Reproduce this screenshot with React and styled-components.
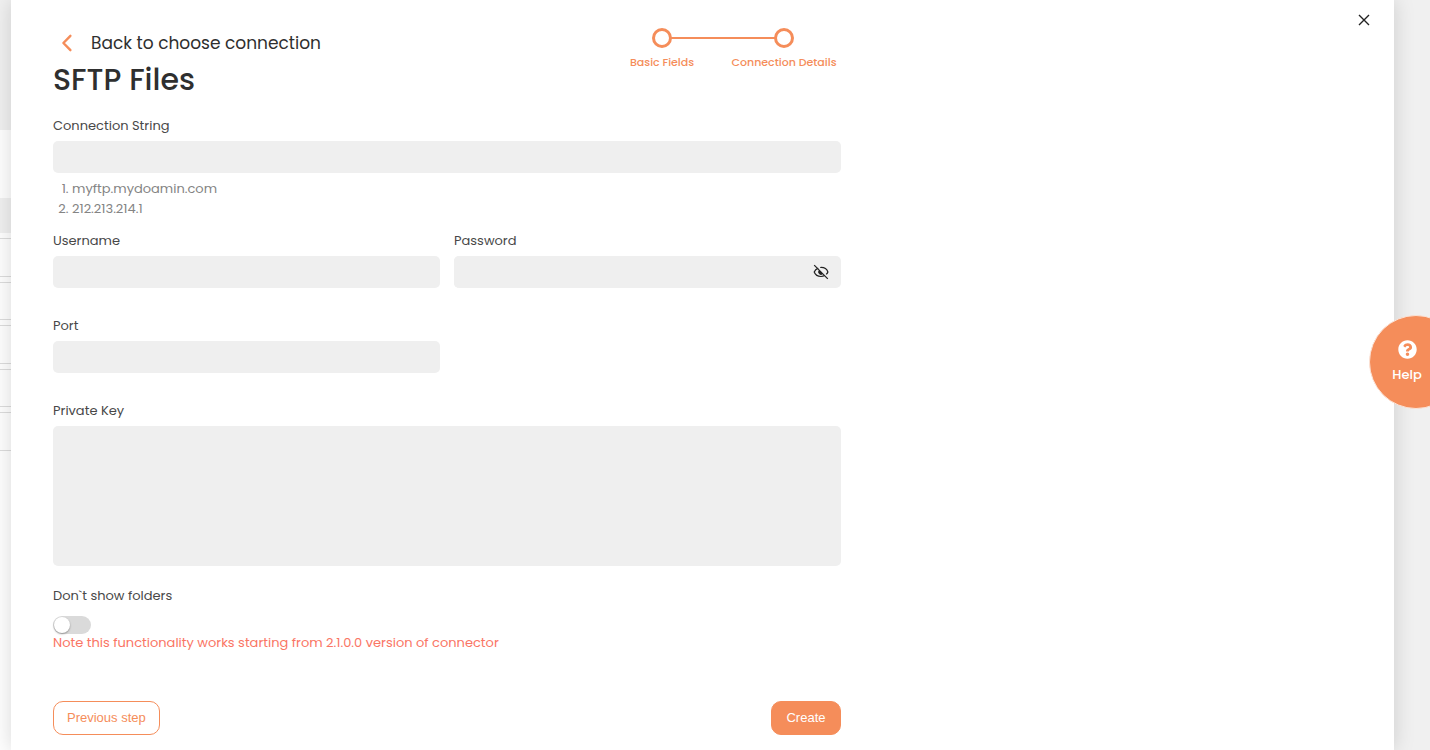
import React, { useState } from "react";
import styled, { createGlobalStyle } from "styled-components";
import { FaQuestionCircle } from "react-icons/fa";

const GlobalStyle = createGlobalStyle`
  *,
  *::before,
  *::after {
    box-sizing: border-box;
  }

  body {
    margin: 0;
    background-color: #f0f0f0;
    color: #2f2f2f;
    font-family: Poppins, Inter, sans-serif;
    font-size: 13px;
  }

  button,
  input,
  textarea {
    font: inherit;
  }
`;

const Page = styled.div`
  display: flex;
  min-height: 100vh;
  padding-right: 36px;
`;

/* the connections list that stays visible behind the drawer */
const Behind = styled.div`
  flex: 0 0 11px;
  overflow: hidden;
  background-color: #fefefe;
`;

const Band = styled.div`
  height: ${({ $height }) => $height}px;
  background-color: ${({ $gray }) => ($gray ? "#f0f0f0" : "transparent")};
`;

const List = styled.div`
  display: grid;
  grid-template-rows: repeat(5, 1fr);
  row-gap: 5px;
  height: 218px;
  padding-top: 5px;
`;

const ListRow = styled.div`
  border-top: 1px solid #dcdcdc;
  border-bottom: 1px solid #dcdcdc;
`;

const Drawer = styled.main`
  position: relative;
  flex: 1;
  display: flex;
  align-items: flex-start;
  justify-content: space-between;
  padding: 28px 22px 15px 42px;
  background-color: #ffffff;
  box-shadow: 0 0 20px rgba(0, 0, 0, 0.15);
`;

const Form = styled.form`
  flex: 0 1 788px;
  min-width: 0;
`;

const Header = styled.header`
  display: flex;
  justify-content: space-between;
  align-items: flex-start;
  margin-bottom: 14px;
`;

const BackLink = styled.a`
  display: flex;
  align-items: center;
  gap: 17px;
  padding-left: 8px;
  color: inherit;
  font-size: 17px;
  line-height: 30px;
  text-decoration: none;
`;

const Title = styled.h1`
  margin: 0;
  font-size: 30px;
  font-weight: 500;
  line-height: 44px;
`;

const Steps = styled.ol`
  display: grid;
  grid-template-columns: 122px 122px;
  margin: 0 -4px 0 0;
  padding: 0;
  list-style: none;
  color: #f58d5a;
  font-size: 11px;
  font-weight: 500;
  line-height: 16px;
`;

const Step = styled.li`
  position: relative;
  display: flex;
  flex-direction: column;
  align-items: center;
  gap: 6px;

  &::before {
    content: "";
    width: 20px;
    height: 20px;
    border: 3px solid #f58d5a;
    border-radius: 50%;
  }

  &:not(:last-child)::after {
    content: "";
    position: absolute;
    top: 9px;
    left: calc(50% + 9px);
    width: calc(100% - 18px);
    height: 2px;
    background-color: #f58d5a;
  }
`;

const Row = styled.div`
  display: grid;
  grid-template-columns: 1fr 1fr;
  gap: 14px;
  margin-bottom: 28px;
`;

const Field = styled.div`
  display: flex;
  flex-direction: column;
`;

const Label = styled.label`
  margin-bottom: 5px;
  color: #484848;
  line-height: 20px;
`;

const Input = styled.input`
  width: 100%;
  height: 32px;
  padding: 0 12px;
  border: none;
  border-radius: 5px;
  background-color: #efefef;
  outline: none;
`;

const TextArea = styled.textarea`
  height: 140px;
  padding: 8px 12px;
  border: none;
  border-radius: 5px;
  background-color: #efefef;
  outline: none;
  resize: none;
`;

const PasswordBox = styled.div`
  display: flex;
  align-items: center;
  padding-right: 12px;
  border-radius: 5px;
  background-color: #efefef;
`;

const IconButton = styled.button`
  display: flex;
  flex: none;
  padding: 0;
  border: none;
  background: none;
  color: #222222;
  cursor: pointer;
`;

const Hints = styled.ol`
  margin: 6px 0 12px;
  padding-left: 19px;
  color: #848484;
  line-height: 20px;
`;

const SwitchField = styled(Field)`
  align-items: flex-start;
  margin-top: 20px;
`;

const Switch = styled.input`
  appearance: none;
  width: 38px;
  height: 18px;
  margin: 5px 0 0;
  padding: 1px;
  border-radius: 9px;
  background-color: #dadada;
  cursor: pointer;

  &::before {
    content: "";
    display: block;
    width: 16px;
    height: 16px;
    border-radius: 50%;
    background-color: #ffffff;
    box-shadow: 0 1px 2px rgba(0, 0, 0, 0.35);
  }

  &:checked {
    background-color: #f58d5a;
  }

  &:checked::before {
    margin-left: auto;
  }
`;

const Note = styled.p`
  margin: 0;
  color: #fa7564;
  line-height: 18px;
`;

const Actions = styled.div`
  display: flex;
  justify-content: space-between;
  margin-top: 49px;
`;

const Button = styled.button`
  min-width: 70px;
  height: 34px;
  padding: 0 13px 2px;
  border: 1px solid #f58d5a;
  border-radius: 10px;
  background-color: ${({ $primary }) => ($primary ? "#f58d5a" : "#ffffff")};
  color: ${({ $primary }) => ($primary ? "#ffffff" : "#f58d5a")};
  font-family: "Liberation Sans", Arial, sans-serif;
  cursor: pointer;
`;

const CloseButton = styled(IconButton)`
  margin-top: -16px;
`;

const HelpButton = styled.button`
  position: fixed;
  top: 315px;
  right: -33px;
  display: flex;
  flex-direction: column;
  align-items: center;
  justify-content: center;
  gap: 6px;
  width: 94px;
  height: 94px;
  padding: 0 18px 0 0;
  border: 1px solid #fbe3d7;
  border-radius: 50%;
  background-color: #f58d5a;
  color: #ffffff;
  font-weight: 500;
  line-height: 20px;
  cursor: pointer;
`;

const BackIcon = () => (
  <svg width="13" height="18" viewBox="0 0 13 18" fill="none">
    <path
      d="M9.4 1.8 L2.4 9 L9.4 16.2"
      stroke="#f58d5a"
      strokeWidth="2.4"
      strokeLinecap="round"
      strokeLinejoin="round"
    />
  </svg>
);

const EyeOffIcon = () => (
  <svg
    width="16"
    height="16"
    viewBox="0 0 16 16"
    fill="none"
    stroke="currentColor"
    strokeWidth="1.2"
  >
    <path d="M5.2 4.1C2.9 5 1.7 6.7 1.2 8C2.2 10.6 4.7 12.5 8 12.5C9.4 12.5 10.6 12.2 11.6 11.6" />
    <path d="M7.2 3.5C11 3.2 13.9 5.1 14.9 8C14.6 8.9 14 9.7 13.2 10.4" />
    <path
      d="M6.2 6.2A2.4 2.4 0 0 0 9.8 9.8Z"
      fill="currentColor"
      strokeWidth="0.6"
    />
    <path d="M1.2 1.2L14.8 14.8" />
  </svg>
);

const CloseIcon = () => (
  <svg width="16" height="16" viewBox="0 0 16 16">
    <path d="M3 3L13 13M13 3L3 13" stroke="currentColor" strokeWidth="1.4" />
  </svg>
);

const App = () => {
  const [showPassword, setShowPassword] = useState(false);

  return (
    <>
      <GlobalStyle />
      <Page>
        <Behind aria-hidden="true">
          <Band $height={130} $gray />
          <Band $height={68} />
          <Band $height={35} $gray />
          <List>
            <ListRow />
            <ListRow />
            <ListRow />
            <ListRow />
            <ListRow />
          </List>
        </Behind>
        <Drawer>
          <Form onSubmit={(e) => e.preventDefault()}>
            <Header>
              <div>
                <BackLink href="#connections">
                  <BackIcon />
                  Back to choose connection
                </BackLink>
                <Title>SFTP Files</Title>
              </div>
              <Steps>
                <Step>Basic Fields</Step>
                <Step>Connection Details</Step>
              </Steps>
            </Header>

            <Field>
              <Label htmlFor="connection">Connection String</Label>
              <Input id="connection" type="text" />
            </Field>
            <Hints>
              <li>myftp.mydoamin.com</li>
              <li>212.213.214.1</li>
            </Hints>

            <Row>
              <Field>
                <Label htmlFor="username">Username</Label>
                <Input id="username" type="text" />
              </Field>
              <Field>
                <Label htmlFor="password">Password</Label>
                <PasswordBox>
                  <Input
                    id="password"
                    type={showPassword ? "text" : "password"}
                  />
                  <IconButton
                    type="button"
                    aria-label="Show password"
                    onClick={() => setShowPassword(!showPassword)}
                  >
                    <EyeOffIcon />
                  </IconButton>
                </PasswordBox>
              </Field>
            </Row>

            <Row>
              <Field>
                <Label htmlFor="port">Port</Label>
                <Input id="port" type="text" />
              </Field>
            </Row>

            <Field>
              <Label htmlFor="key">Private Key</Label>
              <TextArea id="key" />
            </Field>

            <SwitchField>
              <Label htmlFor="folders">Don`t show folders</Label>
              <Switch id="folders" type="checkbox" role="switch" />
              <Note>
                Note this functionality works starting from 2.1.0.0 version of
                connector
              </Note>
            </SwitchField>

            <Actions>
              <Button type="button">Previous step</Button>
              <Button type="submit" $primary>
                Create
              </Button>
            </Actions>
          </Form>
          <CloseButton type="button" aria-label="Close">
            <CloseIcon />
          </CloseButton>
        </Drawer>
      </Page>
      <HelpButton type="button">
        <FaQuestionCircle size={19} />
        Help
      </HelpButton>
    </>
  );
};

export default App;
